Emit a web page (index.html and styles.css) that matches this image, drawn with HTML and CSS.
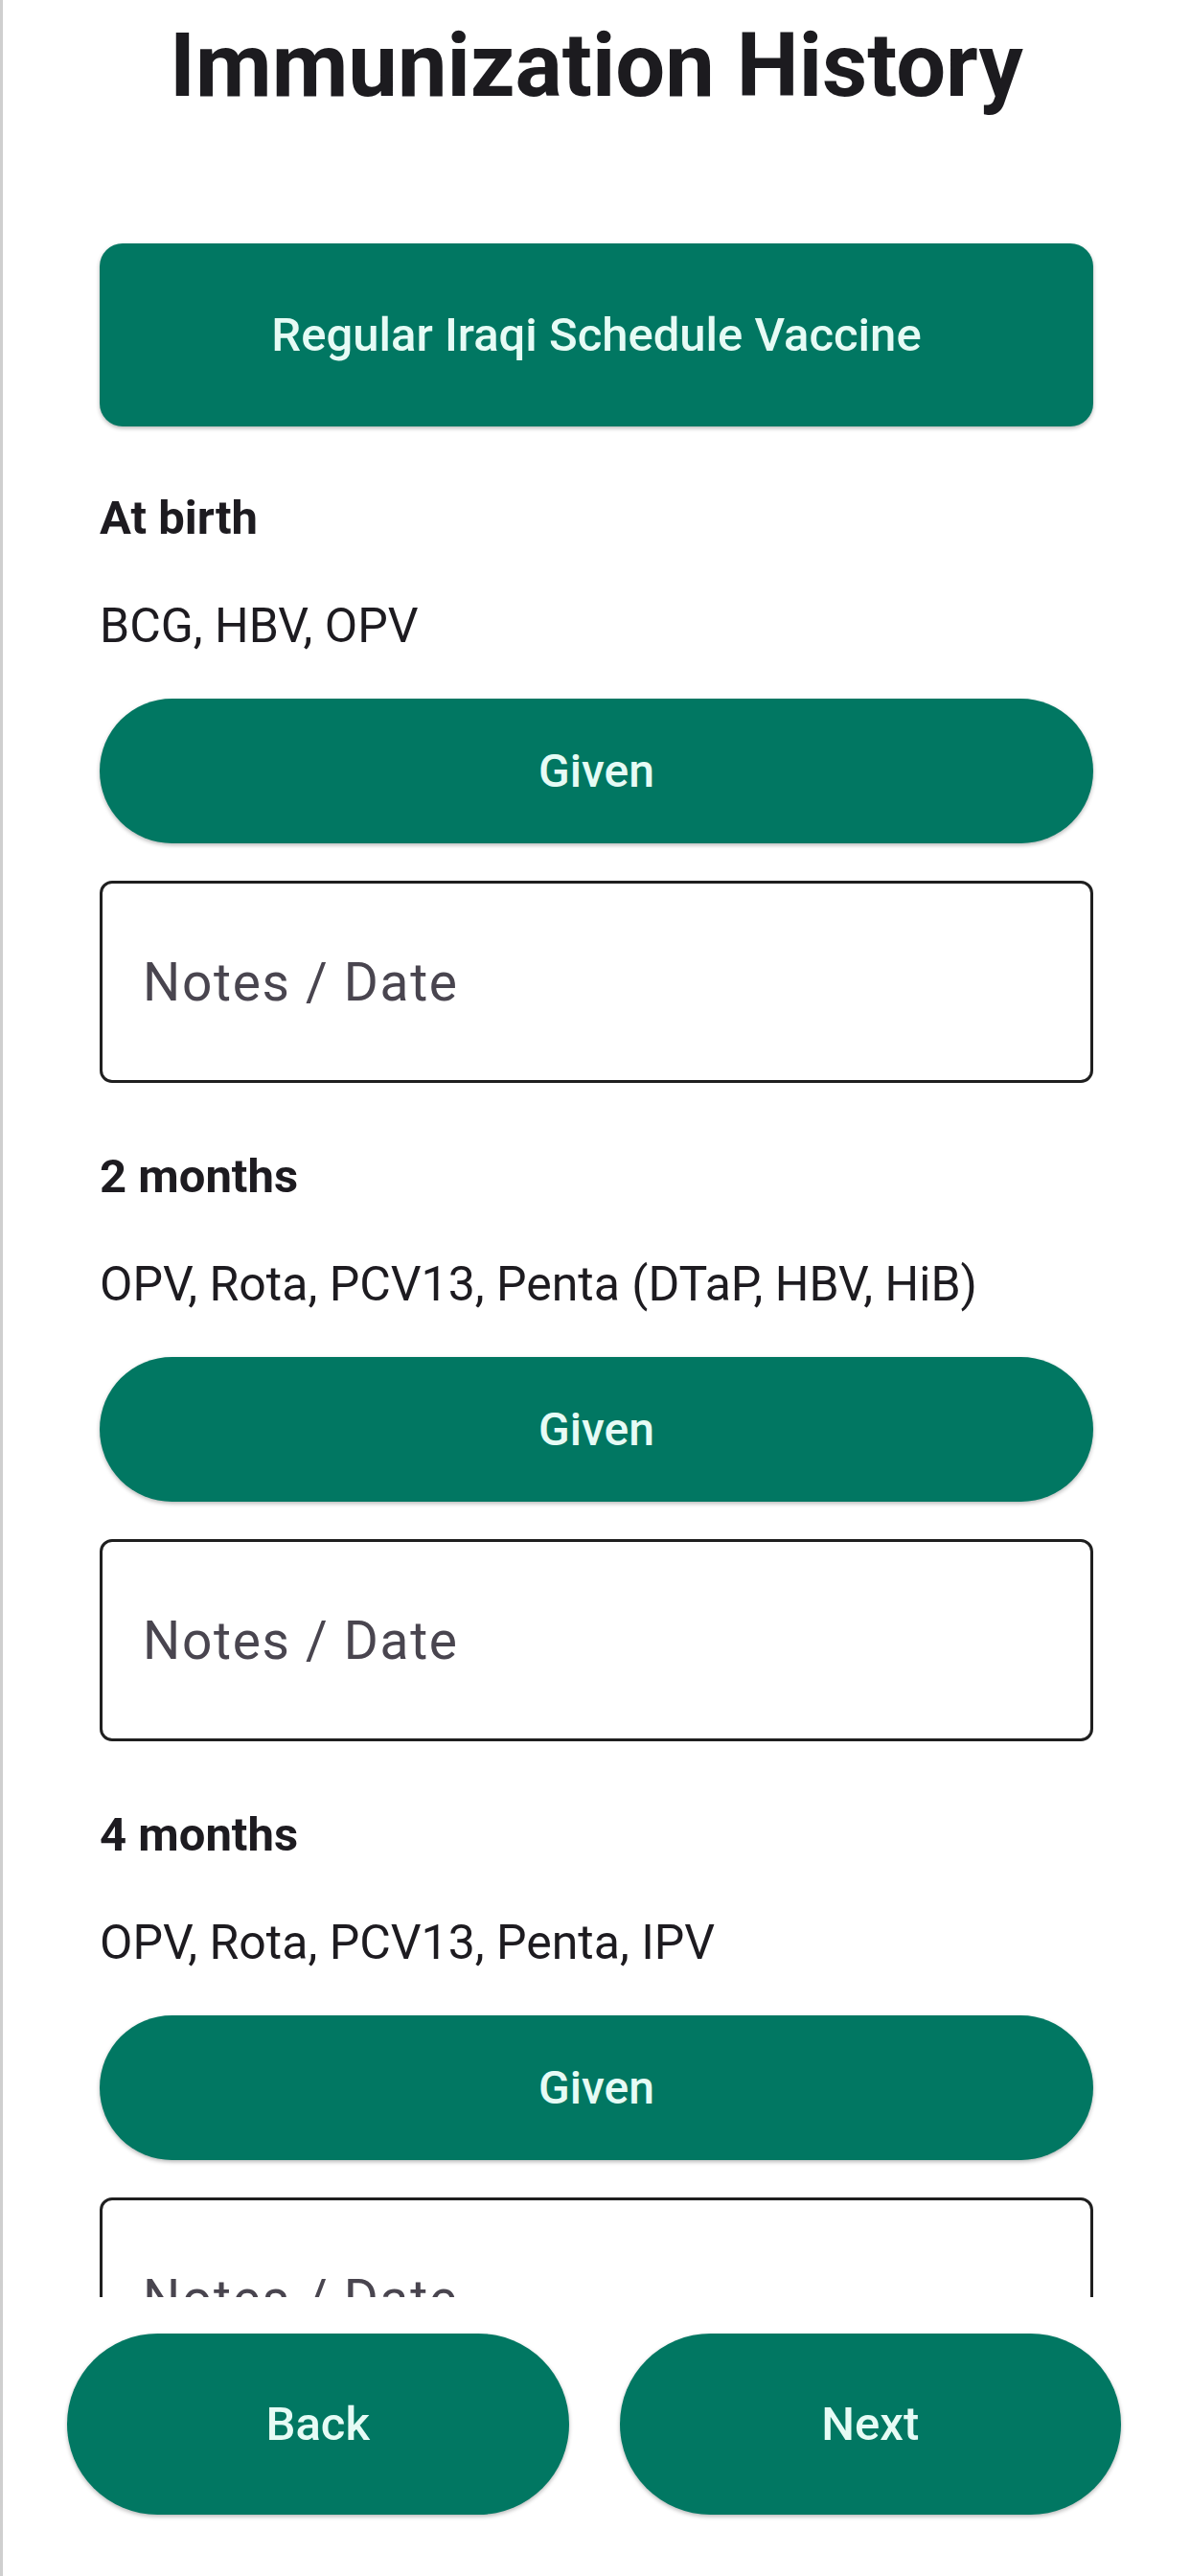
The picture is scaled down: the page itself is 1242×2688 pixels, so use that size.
FILE: index.html
```html
<!DOCTYPE html>
<html lang="en">
<head>
<meta charset="utf-8">
<title>Immunization History</title>
<link rel="stylesheet" href="styles.css">
</head>
<body>
<div class="screen">
  <main class="scroll">
    <h1 class="title">Immunization History</h1>
    <button class="schedule-btn">Regular Iraqi Schedule Vaccine</button>

    <section class="dose">
      <h2 class="dose-age">At birth</h2>
      <p class="dose-vaccines">BCG, HBV, OPV</p>
      <button class="given-btn">Given</button>
      <div class="notes-field"><span class="placeholder">Notes / Date</span></div>
    </section>

    <section class="dose">
      <h2 class="dose-age">2 months</h2>
      <p class="dose-vaccines">OPV, Rota, PCV13, Penta (DTaP, HBV, HiB)</p>
      <button class="given-btn">Given</button>
      <div class="notes-field"><span class="placeholder">Notes / Date</span></div>
    </section>

    <section class="dose">
      <h2 class="dose-age">4 months</h2>
      <p class="dose-vaccines">OPV, Rota, PCV13, Penta, IPV</p>
      <button class="given-btn">Given</button>
      <div class="notes-field"><span class="placeholder">Notes / Date</span></div>
    </section>
  </main>

  <nav class="bottom-bar">
    <button class="nav-btn">Back</button>
    <button class="nav-btn">Next</button>
  </nav>
</div>
</body>
</html>
```

FILE: styles.css
```css
html, body {
  margin: 0;
  padding: 0;
  background: #ffffff;
}

body {
  font-family: Roboto, "Noto Sans", "Liberation Sans", sans-serif;
  color: #1d1b20;
}

.screen {
  box-sizing: border-box;
  width: 1242px;
  height: 2688px;
  border-left: 3px solid #cfcfcf;
  display: flex;
  flex-direction: column;
  overflow: hidden;
}

.scroll {
  box-sizing: border-box;
  height: 2397px;
  flex: none;
  overflow: hidden;
  padding: 14px 101px 0 101px;
  display: flex;
  flex-direction: column;
}

.scroll > *,
.dose > * {
  flex: none;
}

.title {
  margin: 0;
  font-size: 92px;
  line-height: 110px;
  font-weight: 700;
  text-align: center;
  color: #1c1b1f;
}

.schedule-btn,
.given-btn,
.nav-btn {
  border: none;
  background: #017762;
  color: #e6fbf5;
  font-family: Roboto, "Noto Sans", "Liberation Sans", sans-serif;
  font-weight: 500;
  font-size: 48px;
  padding: 0;
  box-shadow: 0 2px 4px rgba(0, 0, 0, 0.28);
  display: flex;
  align-items: center;
  justify-content: center;
}

.schedule-btn {
  margin-top: 130px;
  height: 191px;
  border-radius: 24px;
  font-size: 49px;
}

.dose {
  display: flex;
  flex-direction: column;
  margin-top: 67px;
}

.dose + .dose {
  margin-top: 69px;
}

.dose-age {
  margin: 0;
  font-size: 49px;
  line-height: 57px;
  font-weight: 700;
  color: #1d1b20;
}

.dose-vaccines {
  margin: 56px 0 0 0;
  font-size: 50px;
  line-height: 57px;
  font-weight: 400;
  color: #1d1b20;
}

.given-btn {
  margin-top: 47px;
  height: 151px;
  border-radius: 76px;
}

.notes-field {
  box-sizing: border-box;
  margin-top: 39px;
  height: 211px;
  border: 3px solid #1f1f1f;
  border-radius: 13px;
  padding-left: 42px;
  display: flex;
  align-items: center;
}

.placeholder {
  font-size: 55px;
  letter-spacing: 1.7px;
  color: #49454f;
}

.bottom-bar {
  flex: none;
  display: grid;
  grid-template-columns: 1fr 1fr;
  column-gap: 53px;
  padding: 38px 72px 0 67px;
}

.nav-btn {
  height: 189px;
  border-radius: 95px;
  font-size: 49px;
}
```
